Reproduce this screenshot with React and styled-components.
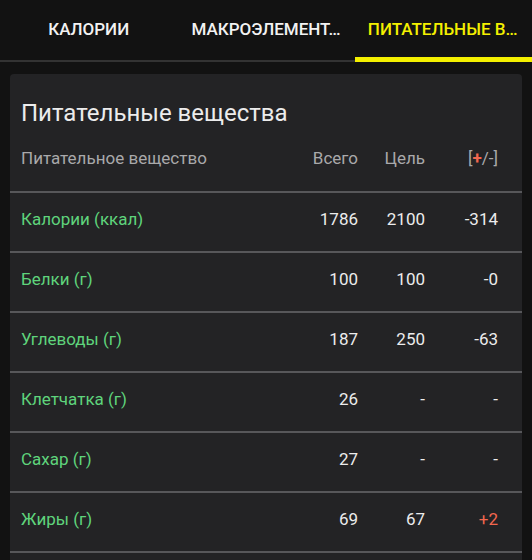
import React from "react";
import styled, { createGlobalStyle } from "styled-components";

const Global = createGlobalStyle`
  html, body { margin: 0; padding: 0; background: #121212; }
  body { font-family: Roboto, "Noto Sans", sans-serif; }
`;

const Page = styled.div`
  width: 532px;
  height: 560px;
  overflow: hidden;
  background: #121212;
  display: flex;
  flex-direction: column;
`;

const TabBar = styled.div`
  display: grid;
  grid-template-columns: repeat(3, 1fr);
  height: 60px;
  border-bottom: 2px solid #333333;
  flex-shrink: 0;
`;

const Tab = styled.div`
  position: relative;
  display: flex;
  align-items: center;
  justify-content: center;
  padding: 0 10px 2px;
  min-width: 0;
  color: ${(p) => (p.$active ? "#f4f000" : "#f2f2f2")};
  font-size: 17px;
  font-weight: 500;
  text-transform: uppercase;
  &::after {
    content: "";
    display: ${(p) => (p.$active ? "block" : "none")};
    position: absolute;
    left: 0;
    right: 0;
    bottom: -2px;
    height: 5px;
    background: #f4f000;
  }
`;

const TabLabel = styled.span`
  max-width: 151px;
  white-space: nowrap;
  overflow: hidden;
  text-overflow: ellipsis;
`;

const Card = styled.div`
  margin: 12px 10px 0;
  background: #232325;
  border-radius: 4px 4px 0 0;
  padding-top: 23px;
`;

const Title = styled.div`
  padding: 0 11px;
  color: #ececec;
  font-size: 24px;
  line-height: 32px;
`;

const Row = styled.div`
  display: grid;
  grid-template-columns: 1fr 60px 67px 73px;
  align-items: center;
  padding: 0 24px 0 11px;
  height: ${(p) => (p.$header ? "62px" : "58px")};
  border-bottom: 2px solid #57575a;
  font-size: 17px;
`;

const Name = styled.div`
  color: ${(p) => (p.$header ? "#a9a9ab" : "#5fd47c")};
  white-space: nowrap;
  padding-bottom: ${(p) => (p.$header ? "4px" : "6px")};
`;

const Cell = styled.div`
  text-align: right;
  white-space: nowrap;
  color: ${(p) => (p.$header ? "#a9a9ab" : p.$over ? "#f2674f" : "#ececec")};
  padding-bottom: ${(p) => (p.$header ? "4px" : "6px")};
`;

const Plus = styled.span`
  color: #f2674f;
  font-weight: 700;
`;

const rows = [
  ["Калории (ккал)", "1786", "2100", "-314"],
  ["Белки (г)", "100", "100", "-0"],
  ["Углеводы (г)", "187", "250", "-63"],
  ["Клетчатка (г)", "26", "-", "-"],
  ["Сахар (г)", "27", "-", "-"],
  ["Жиры (г)", "69", "67", "+2"],
  ["Насыщенные жиры (г)", "20", "-", "-"],
];

export default function App() {
  return (
    <Page>
      <Global />
      <TabBar>
        <Tab><TabLabel>Калории</TabLabel></Tab>
        <Tab><TabLabel>Макроэлемент…</TabLabel></Tab>
        <Tab $active><TabLabel>Питательные вещества</TabLabel></Tab>
      </TabBar>
      <Card>
        <Title>Питательные вещества</Title>
        <Row $header>
          <Name $header>Питательное вещество</Name>
          <Cell $header>Всего</Cell>
          <Cell $header>Цель</Cell>
          <Cell $header>[<Plus>+</Plus>/-]</Cell>
        </Row>
        {rows.map((r) => (
          <Row key={r[0]}>
            <Name>{r[0]}</Name>
            <Cell>{r[1]}</Cell>
            <Cell>{r[2]}</Cell>
            <Cell $over={r[3].startsWith("+")}>{r[3]}</Cell>
          </Row>
        ))}
      </Card>
    </Page>
  );
}
